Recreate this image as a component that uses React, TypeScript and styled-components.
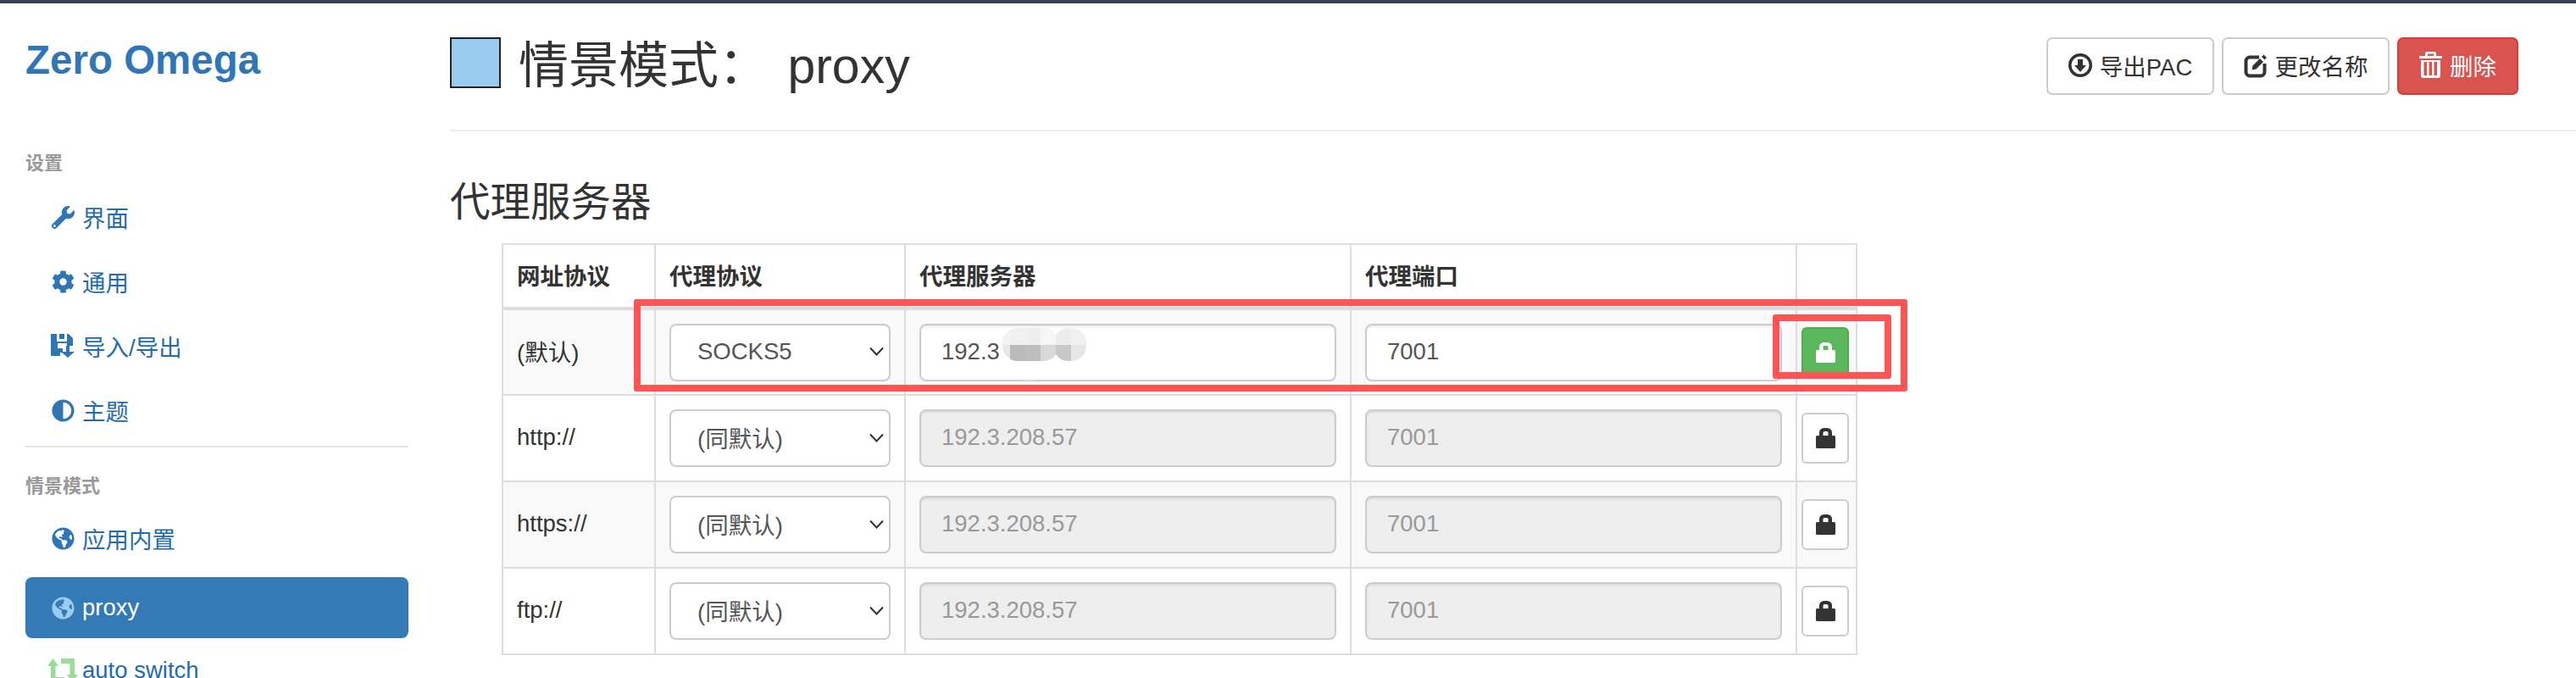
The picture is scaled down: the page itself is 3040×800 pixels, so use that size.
import React from "react";
import styled, { createGlobalStyle } from "styled-components";
import { FaAdjust, FaCog, FaGlobeAmericas, FaWrench } from "react-icons/fa";

const Global = createGlobalStyle`
  html, body {
    margin: 0;
    padding: 0;
    background: #fff;
    overflow: hidden;
  }
  body {
    font-family: "Liberation Sans", "Noto Sans CJK SC", sans-serif;
    font-size: 27.5px;
    color: #333;
  }
`;

const navSettings = [
  { title: "界面", icon: <FaWrench /> },
  { title: "通用", icon: <FaCog /> },
  { title: "导入/导出", icon: <SaveIcon /> },
  { title: "主题", icon: <FaAdjust /> },
];

const rows = [
  { scheme: "(默认)", protocol: "SOCKS5", host: "192.3", port: "7001", active: true },
  { scheme: "http://", protocol: "(同默认)", host: "192.3.208.57", port: "7001" },
  { scheme: "https://", protocol: "(同默认)", host: "192.3.208.57", port: "7001" },
  { scheme: "ftp://", protocol: "(同默认)", host: "192.3.208.57", port: "7001" },
];

// the smudge that hides the rest of the server address
const smudgeTop = ["#f3f3f3", "#f0f0f0", "#eeeeee", "#f6f6f6", "#ececec", "#f0f0f0"];
const smudgeBottom = ["#e8e8e8", "#bbbbbb", "#bebebe", "#d8d8d8", "#c8c8c8", "#e6e6e6"];
const smudgeX = [0, 9, 27, 45, 63, 81];
const smudgeWidth = [9, 18, 18, 18, 18, 18];

function SaveIcon() {
  return (
    <svg viewBox="0 0 28 28" width="28" height="28" fill="currentColor">
      <path d="M0 0h7v9h12V0h2l5 5v9h-7v-3H8v6h6v5H11v4H1a1 1 0 0 1-1-1z" />
      <path d="M10 0h6v6h-6z" />
      <path d="M18 14h4v7h6l-8 7-8-7h6z" />
    </svg>
  );
}

const RetweetIcon = () => (
  <svg viewBox="0 0 36 28" width="36" height="28" fill="currentColor">
    <path d="M6.500 0 13 9H9.500v13H20v6H5a1 1 0 0 1-1-1V9H0z" />
    <path d="M16 0h15a1 1 0 0 1 1 1v18h4l-6.500 9L23 19h3.500V6H16z" />
  </svg>
);

const LockIcon = () => (
  <svg viewBox="0 0 23 24" width="23" height="24" fill="currentColor">
    <path
      fillRule="evenodd"
      d="M4 9V5.500A5.500 5.500 0 0 1 9.500 0h4A5.500 5.500 0 0 1 19 5.500V9h2.500A1.500 1.500 0 0 1 23 10.500v12a1.500 1.500 0 0 1-1.500 1.500h-20A1.500 1.500 0 0 1 0 22.500v-12A1.500 1.500 0 0 1 1.500 9zM8.500 9h6V5.500A1.500 1.500 0 0 0 13 4h-3a1.500 1.500 0 0 0-1.500 1.500z"
    />
  </svg>
);

const DownloadIcon = () => (
  <svg viewBox="0 0 28 28" width="28" height="28" fill="currentColor">
    <path fillRule="evenodd" d="M14 0a14 14 0 1 1 0 28a14 14 0 0 1 0-28zm0 3.500a10.500 10.500 0 1 0 0 21a10.500 10.500 0 0 0 0-21z" />
    <path d="M11 7h6v7h4l-7 8-7-8h4z" />
  </svg>
);

const EditIcon = () => (
  <svg viewBox="0 0 28 30" width="28" height="30" fill="none">
    <path d="M18 5.500H7A4.500 4.500 0 0 0 2.500 10v13A4.500 4.500 0 0 0 7 27.500h13a4.500 4.500 0 0 0 4.500-4.500V13" stroke="currentColor" strokeWidth="4" />
    <path d="M9.500 20.500 10.500 15.500 19 7l4 4-8.500 8.500z" fill="currentColor" />
    <path d="M21 5l2.500-2.500 3.500 3.500L24.500 8.500z" fill="currentColor" />
  </svg>
);

const TrashIcon = () => (
  <svg viewBox="0 0 27 31" width="27" height="31" fill="currentColor">
    <path fillRule="evenodd" d="M9 0h9a2 2 0 0 1 2 2v3h7v3H0V5h7V2a2 2 0 0 1 2-2zm1 2.500V5h7V2.500z" />
    <path fillRule="evenodd" d="M2 10h23v18a3 3 0 0 1-3 3H5a3 3 0 0 1-3-3zm3.500 2v16h3.500V12zm6 0v16h3.500V12zm6 0v16h3.500V12z" />
  </svg>
);

const Chevron = () => (
  <svg viewBox="0 0 17 11" width="17" height="11" fill="none" stroke="#333" strokeWidth="2">
    <path d="M1 1.500 8.500 9.500 16 1.500" />
  </svg>
);

const TopBar = styled.div`
  height: 4px;
  background-color: #3a4152;
`;

const Layout = styled.div`
  display: flex;
  height: 796px;
  overflow: hidden;
`;

const Sidebar = styled.aside`
  width: 452px;
  flex-shrink: 0;
  margin-left: 30px;
  margin-right: 49px;
`;

const Logo = styled.h1`
  margin: 40px 0 0;
  font-size: 47.5px;
  line-height: 54px;
  font-weight: 700;
  color: #2f76b6;
`;

const NavHeader = styled.div<{ $first?: boolean }>`
  margin-top: ${({ $first }) => ($first ? "82px" : "33px")};
  font-size: 22px;
  line-height: 26px;
  font-weight: 700;
  color: #999;
`;

const NavList = styled.div<{ $tight?: boolean }>`
  margin-top: ${({ $tight }) => ($tight ? "12px" : "14px")};
  display: flex;
  flex-direction: column;
`;

const NavItem = styled.a<{ $active?: boolean }>`
  display: flex;
  align-items: center;
  height: 72px;
  margin-top: ${({ $active }) => ($active ? "6px" : "0")};
  margin-bottom: ${({ $active }) => ($active ? "2px" : "4px")};
  padding-left: 30px;
  border-radius: 8px;
  font-size: 27.5px;
  text-decoration: none;
  color: ${({ $active }) => ($active ? "#fff" : "#1f6cae")};
  background-color: ${({ $active }) => ($active ? "#337ab7" : "transparent")};
`;

const NavIcon = styled.span<{ $color?: string }>`
  display: flex;
  justify-content: center;
  width: 28px;
  margin-right: 9px;
  font-size: 27px;
  color: ${({ $color }) => $color || "#2f76b6"};

  svg {
    display: block;
    flex-shrink: 0;
  }
`;

const NavRule = styled.div`
  height: 2px;
  margin-top: 2px;
  background-color: #e5e5e5;
`;

const Content = styled.main`
  flex: 1;
  min-width: 0;
`;

const PageHeader = styled.header`
  display: flex;
  align-items: flex-start;
  justify-content: space-between;
  height: 149px;
  padding-right: 68px;
  border-bottom: 2px solid #eee;
`;

const TitleGroup = styled.div`
  display: flex;
  align-items: flex-start;
  margin-top: 40px;
`;

const Swatch = styled.span`
  width: 60px;
  height: 60px;
  box-sizing: border-box;
  border: 2px solid #222;
  background-color: #99ccee;
  margin-right: 21px;
`;

const Title = styled.h1`
  margin: 0;
  padding-top: 4px;
  font-size: 59px;
  line-height: 60px;
  font-weight: 400;
  color: #333;
  white-space: pre;
  word-spacing: 6px;
`;

const Actions = styled.div`
  display: flex;
  gap: 9px;
  margin-top: 40px;
`;

const ActionButton = styled.button<{ $danger?: boolean }>`
  display: flex;
  align-items: center;
  justify-content: center;
  gap: 9px;
  height: 68px;
  padding: 0 0 3px;
  width: ${({ $danger }) => ($danger ? "143px" : "198px")};
  box-sizing: border-box;
  border: 2px solid ${({ $danger }) => ($danger ? "#d43f3a" : "#ccc")};
  border-radius: 7px;
  font-family: inherit;
  font-size: 27.5px;
  color: ${({ $danger }) => ($danger ? "#fff" : "#333")};
  background-color: ${({ $danger }) => ($danger ? "#d9534f" : "#fff")};
`;

const SectionTitle = styled.h2`
  margin: 56px 0 0;
  font-size: 47.5px;
  line-height: 56px;
  font-weight: 400;
  color: #333;
`;

const TableWrap = styled.div`
  position: relative;
  margin: 20px 0 0 61px;
  width: 1598px;
`;

const ProxyTable = styled.table`
  border-collapse: collapse;
  table-layout: fixed;
  width: 1598px;
`;

const HeadCell = styled.th<{ $width: number }>`
  width: ${({ $width }) => $width}px;
  height: 76px;
  padding: 0 0 4px 16px;
  box-sizing: border-box;
  border: 2px solid #ddd;
  border-bottom-width: 4px;
  text-align: left;
  font-size: 27.5px;
  font-weight: 700;
  color: #333;
`;

const Row = styled.tr<{ $striped: boolean }>`
  background-color: ${({ $striped }) => ($striped ? "#f9f9f9" : "#fff")};
`;

const Cell = styled.td`
  height: 102px;
  padding: 0 16px;
  box-sizing: border-box;
  border: 2px solid #ddd;
  font-size: 27.5px;
  color: #333;
`;

const SchemeCell = styled(Cell)`
  padding-bottom: 3px;
`;

const ButtonCell = styled(Cell)`
  padding: 0 5px;
`;

const Field = styled.div<{ $disabled?: boolean }>`
  display: flex;
  align-items: center;
  justify-content: space-between;
  height: 68px;
  box-sizing: border-box;
  padding: 0 6px 2px 24px;
  border: 2px solid #ccc;
  border-radius: 8px;
  box-shadow: inset 0 2px 2px rgba(0, 0, 0, 0.075);
  font-size: 27.5px;
  color: ${({ $disabled }) => ($disabled ? "#999" : "#555")};
  background-color: ${({ $disabled }) => ($disabled ? "#eee" : "#fff")};
`;

const SelectField = styled(Field)`
  box-shadow: none;
  padding-left: 31px;
`;

const LockButton = styled.button<{ $active?: boolean }>`
  display: flex;
  align-items: center;
  justify-content: center;
  width: 56px;
  height: 60px;
  padding: 0;
  box-sizing: border-box;
  border: 2px solid ${({ $active }) => ($active ? "#4cae4c" : "#ccc")};
  border-radius: 6px;
  color: ${({ $active }) => ($active ? "#fff" : "#333")};
  background-color: ${({ $active }) => ($active ? "#5cb85c" : "#fff")};
`;

const Smudge = styled.svg`
  position: absolute;
  left: 591px;
  top: 100px;
`;

const Annotation = styled.div`
  position: absolute;
  left: 156px;
  top: 66px;
  width: 1503px;
  height: 109px;
  box-sizing: border-box;
  border: 8px solid #ff5454;
  border-radius: 3px;
  pointer-events: none;
`;

const ButtonAnnotation = styled(Annotation)`
  left: 1500px;
  top: 84px;
  width: 140px;
  height: 76px;
`;

export default function App() {
  return (
    <>
      <Global />
      <TopBar />
      <Layout>
        <Sidebar>
          <Logo>Zero Omega</Logo>
          <NavHeader $first>设置</NavHeader>
          <NavList>
            {navSettings.map((item) => (
              <NavItem key={item.title}>
                <NavIcon>{item.icon}</NavIcon>
                {item.title}
              </NavItem>
            ))}
          </NavList>
          <NavRule />
          <NavHeader>情景模式</NavHeader>
          <NavList $tight>
            <NavItem>
              <NavIcon>
                <FaGlobeAmericas />
              </NavIcon>
              应用内置
            </NavItem>
            <NavItem $active>
              <NavIcon $color="#99ccee">
                <FaGlobeAmericas />
              </NavIcon>
              proxy
            </NavItem>
            <NavItem>
              <NavIcon $color="#99dd99">
                <RetweetIcon />
              </NavIcon>
              auto switch
            </NavItem>
          </NavList>
        </Sidebar>
        <Content>
          <PageHeader>
            <TitleGroup>
              <Swatch />
              <Title>情景模式： proxy</Title>
            </TitleGroup>
            <Actions>
              <ActionButton>
                <DownloadIcon />
                导出PAC
              </ActionButton>
              <ActionButton>
                <EditIcon />
                更改名称
              </ActionButton>
              <ActionButton $danger>
                <TrashIcon />
                删除
              </ActionButton>
            </Actions>
          </PageHeader>
          <SectionTitle>代理服务器</SectionTitle>
          <TableWrap>
            <ProxyTable>
              <thead>
                <tr>
                  <HeadCell $width={180}>网址协议</HeadCell>
                  <HeadCell $width={295}>代理协议</HeadCell>
                  <HeadCell $width={526}>代理服务器</HeadCell>
                  <HeadCell $width={526}>代理端口</HeadCell>
                  <HeadCell $width={71} />
                </tr>
              </thead>
              <tbody>
                {rows.map((row, index) => (
                  <Row key={row.scheme} $striped={index % 2 === 0}>
                    <SchemeCell>{row.scheme}</SchemeCell>
                    <Cell>
                      <SelectField>
                        {row.protocol}
                        <Chevron />
                      </SelectField>
                    </Cell>
                    <Cell>
                      <Field $disabled={!row.active}>{row.host}</Field>
                    </Cell>
                    <Cell>
                      <Field $disabled={!row.active}>{row.port}</Field>
                    </Cell>
                    <ButtonCell>
                      <LockButton $active={row.active}>
                        <LockIcon />
                      </LockButton>
                    </ButtonCell>
                  </Row>
                ))}
              </tbody>
            </ProxyTable>
            <Smudge viewBox="0 0 99 62" width="99" height="62">
              <defs>
                <clipPath id="smudge-shape">
                  <rect x="0" y="0" width="66" height="39" rx="18" />
                  <rect x="60" y="0" width="39" height="39" rx="18" />
                </clipPath>
              </defs>
              <g clipPath="url(#smudge-shape)">
                {smudgeX.map((x, i) => (
                  <React.Fragment key={x}>
                    <rect x={x} y="0" width={smudgeWidth[i]} height="20" fill={smudgeTop[i]} />
                    <rect x={x} y="20" width={smudgeWidth[i]} height="19" fill={smudgeBottom[i]} />
                  </React.Fragment>
                ))}
              </g>
              <ellipse cx="32" cy="59" rx="17" ry="2.500" fill="#fff" opacity="0.8" />
            </Smudge>
            <Annotation />
            <ButtonAnnotation />
          </TableWrap>
        </Content>
      </Layout>
    </>
  );
}
